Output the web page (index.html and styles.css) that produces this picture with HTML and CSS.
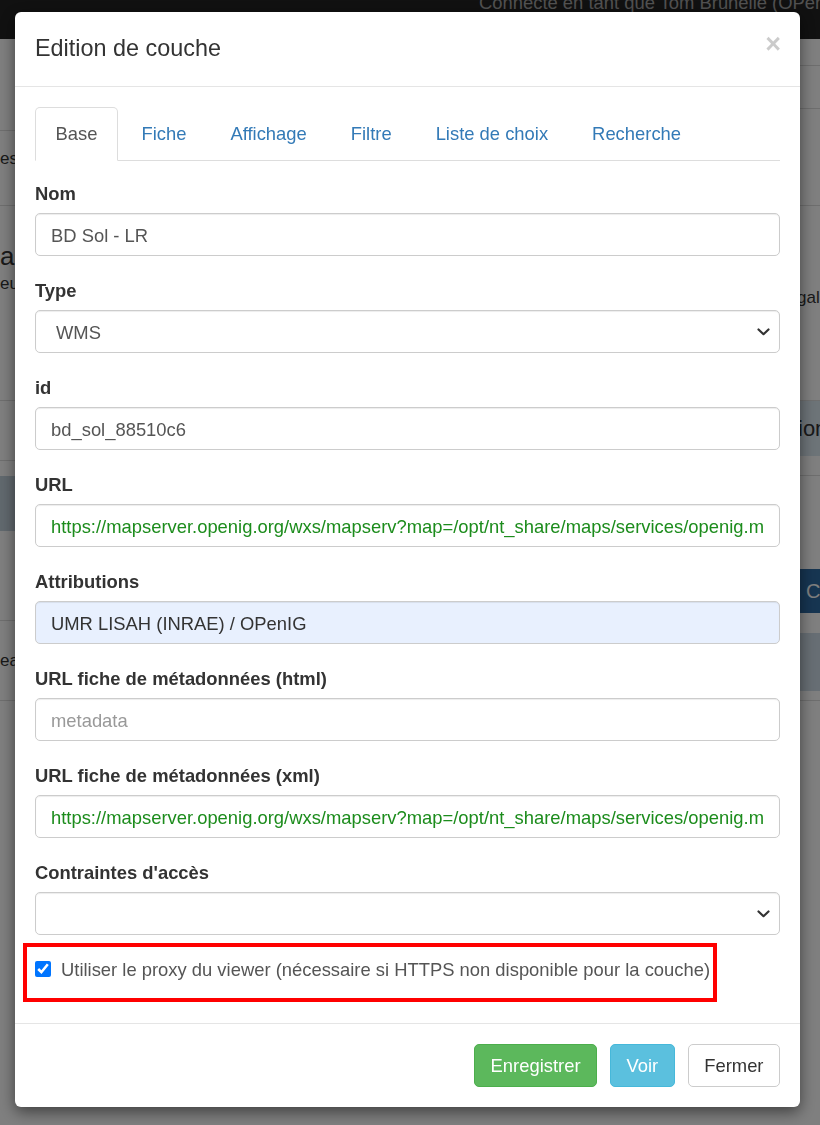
FILE: index.html
```html
<!DOCTYPE html>
<html lang="fr">
<head>
<meta charset="utf-8">
<title>Edition de couche</title>
<link rel="stylesheet" href="styles.css">
</head>
<body>
<div class="page">
  <header class="navbar"><span class="navbar-user">Connecté en tant que Tom Brunelle (OPenIG)</span></header>
  <div class="page-cols">
    <div class="col col-left">
      <div class="bg-row la"></div>
      <div class="bg-row lb"><span class="bg-text">es</span></div>
      <div class="bg-row lc"><span class="bg-title">ar</span><span class="bg-text small">eu</span></div>
      <div class="bg-row ld"></div>
      <div class="bg-spacer"></div>
      <div class="bg-band lband"></div>
      <div class="bg-row le"></div>
      <div class="bg-row lf"><span class="bg-text">ea</span></div>
    </div>
    <div class="col col-right">
      <div class="bg-row ra"></div>
      <div class="bg-row rb"></div>
      <div class="bg-row rc"></div>
      <div class="bg-row rd"><span class="bg-text">gale</span></div>
      <div class="bg-band rband"><span class="bg-big">ion</span></div>
      <div class="bg-row re"></div>
      <div class="bg-row rf"><span class="bg-btn">Co</span></div>
      <div class="bg-band rband2"></div>
      <div class="bg-row rg"></div>
    </div>
  </div>
</div>

<div class="modal-layer">
  <div class="modal">
    <div class="modal-header">
      <h4 class="modal-title">Edition de couche</h4>
      <button class="close" type="button" aria-label="Fermer">×</button>
    </div>
    <div class="modal-body">
      <ul class="nav-tabs">
        <li class="active"><a>Base</a></li>
        <li><a>Fiche</a></li>
        <li><a>Affichage</a></li>
        <li><a>Filtre</a></li>
        <li><a>Liste de choix</a></li>
        <li><a>Recherche</a></li>
      </ul>
      <div class="tab-content">
        <div class="form-group">
          <label>Nom</label>
          <input class="form-control" type="text" value="BD Sol - LR">
        </div>
        <div class="form-group">
          <label>Type</label>
          <div class="select-wrap">
            <select class="form-control select"><option>WMS</option></select>
            <svg class="chevron" width="13" height="8" viewBox="0 0 13 8"><polyline points="1.5,1.5 6.5,6.2 11.5,1.5" fill="none" stroke="#333" stroke-width="2.2" stroke-linecap="round" stroke-linejoin="round"/></svg>
          </div>
        </div>
        <div class="form-group">
          <label>id</label>
          <input class="form-control" type="text" value="bd_sol_88510c6">
        </div>
        <div class="form-group">
          <label>URL</label>
          <input class="form-control url" type="text" value="https://mapserver.openig.org/wxs/mapserv?map=/opt/nt_share/maps/services/openig.map">
        </div>
        <div class="form-group">
          <label>Attributions</label>
          <input class="form-control autofill" type="text" value="UMR LISAH (INRAE) / OPenIG">
        </div>
        <div class="form-group">
          <label>URL fiche de métadonnées (html)</label>
          <input class="form-control" type="text" placeholder="metadata">
        </div>
        <div class="form-group">
          <label>URL fiche de métadonnées (xml)</label>
          <input class="form-control url" type="text" value="https://mapserver.openig.org/wxs/mapserv?map=/opt/nt_share/maps/services/openig.map">
        </div>
        <div class="form-group tight">
          <label>Contraintes d'accès</label>
          <div class="select-wrap">
            <select class="form-control select"><option></option></select>
            <svg class="chevron" width="13" height="8" viewBox="0 0 13 8"><polyline points="1.5,1.5 6.5,6.2 11.5,1.5" fill="none" stroke="#333" stroke-width="2.2" stroke-linecap="round" stroke-linejoin="round"/></svg>
          </div>
        </div>
        <div class="highlight">
          <label class="checkbox"><input type="checkbox" checked><span>Utiliser le proxy du viewer (nécessaire si HTTPS non disponible pour la couche)</span></label>
        </div>
      </div>
    </div>
    <div class="modal-footer">
      <button class="btn btn-success" type="button">Enregistrer</button>
      <button class="btn btn-info" type="button">Voir</button>
      <button class="btn btn-default" type="button">Fermer</button>
    </div>
  </div>
</div>
</body>
</html>
```

FILE: styles.css
```css
* { box-sizing: border-box; }
html, body { margin: 0; height: 100%; }
body {
  font-family: "Liberation Sans", Arial, Helvetica, sans-serif;
  font-size: 18.4px;
  color: #333;
  background: #fff;
  overflow: hidden;
}

/* ---------- page behind the modal ---------- */
.navbar {
  height: 39px;
  background: #222;
  color: #a3a3a3;
  padding-left: 479px;
  white-space: nowrap;
  overflow: hidden;
}
.navbar-user { display: block; line-height: 20px; margin-top: -7px; font-size: 18.4px; }
.page-cols { display: grid; grid-template-columns: 400px 420px; }
.col { display: flex; flex-direction: column; white-space: nowrap; overflow: hidden; }
.bg-row { border-bottom: 1px solid #ddd; }
.bg-text { display: block; line-height: 20px; font-size: 17px; color: #333; }
.bg-title { display: block; line-height: 28px; font-size: 26px; color: #333; }
.bg-big { display: block; line-height: 55px; font-size: 22px; color: #333; padding-left: 398px; }
.la { height: 92px; }
.lb { height: 75px; padding-top: 18px; }
.lc { height: 195px; padding-top: 36px; }
.lc .small { margin-top: 4px; }
.ld { height: 60px; }
.bg-spacer { height: 15px; }
.bg-band { height: 55px; }
.lband { background: #c3d2dd; }
.le { height: 90px; }
.lf { height: 80px; padding-top: 30px; }

.ra { height: 27px; }
.rb { height: 43px; }
.rc { height: 97px; }
.rd { height: 195px; padding-top: 82px; padding-left: 397px; }
.rband { background: #dbe8f1; }
.re { height: 20px; }
.rf { height: 157px; padding-top: 93px; padding-left: 398px; border-bottom: none; }
.bg-btn {
  display: block;
  height: 44px;
  line-height: 44px;
  background: #2d6aa3;
  color: #fff;
  padding-left: 8px;
  font-size: 20px;
}
.rband2 { height: 58px; background: #cfdde8; }
.rg { height: 10px; }

/* ---------- modal ---------- */
.modal-layer {
  position: fixed;
  inset: 0;
  background: rgba(0, 0, 0, 0.5);
  padding: 12px 0 0 15px;
}
.modal {
  width: 785px;
  height: 1095px;
  background: #fff;
  border-radius: 6px;
  box-shadow: 0 5px 15px rgba(0, 0, 0, 0.5);
  display: flex;
  flex-direction: column;
}
.modal-header {
  height: 75px;
  padding: 0 20px;
  border-bottom: 1px solid #e5e5e5;
  display: flex;
  align-items: center;
  justify-content: space-between;
}
.modal-title {
  margin: 0;
  font-size: 23.4px;
  font-weight: normal;
  line-height: 32px;
  color: #333;
  margin-top: -3px;
}
.close {
  border: 0;
  background: transparent;
  padding: 0;
  font-family: "Liberation Sans", Arial, sans-serif;
  font-size: 27px;
  font-weight: bold;
  line-height: 1;
  color: #000;
  opacity: 0.2;
  align-self: flex-start;
  margin-top: 19px;
  margin-right: -1px;
}
.modal-body {
  flex: 1;
  padding: 20px 20px 0;
}

/* tabs */
.nav-tabs {
  list-style: none;
  margin: 0;
  padding: 0;
  display: flex;
  border-bottom: 1px solid #ddd;
}
.nav-tabs li { margin-bottom: -1px; margin-right: 3px; }
.nav-tabs a {
  display: block;
  height: 54px;
  line-height: 52px;
  padding: 0 19.5px;
  border: 1px solid transparent;
  border-radius: 5px 5px 0 0;
  color: #337ab7;
  font-size: 18.4px;
}
.nav-tabs .active a {
  color: #555;
  background: #fff;
  border-color: #ddd #ddd transparent;
}
.tab-content { padding-top: 20px; }

/* form */
.form-group { margin-bottom: 22px; }
.form-group.tight { margin-bottom: 8px; }
.form-group label {
  display: block;
  font-weight: bold;
  line-height: 25px;
  margin-bottom: 7px;
  font-size: 18.4px;
  color: #333;
}
.form-control {
  display: block;
  width: 100%;
  height: 43px;
  padding: 2px 15px 0;
  font-family: "Liberation Sans", Arial, sans-serif;
  font-size: 18.4px;
  color: #555;
  background: #fff;
  border: 1px solid #ccc;
  border-radius: 5px;
  box-shadow: inset 0 1px 1px rgba(0, 0, 0, 0.075);
  outline: none;
}
.form-control::placeholder { color: #999; }
.form-control.url { color: #1c8c1c; }
.form-control.autofill { background: #e8f0fe; color: #333; }
.select-wrap { position: relative; }
.select { appearance: none; -webkit-appearance: none; padding-left: 20px; }
.chevron { position: absolute; right: 10px; top: 18px; pointer-events: none; }

/* highlighted checkbox */
.highlight {
  border: 4px solid #ff0000;
  margin-left: -12px;
  width: 694px;
  height: 59px;
  padding: 10px 0 0 8px;
}
.checkbox {
  display: flex;
  align-items: flex-start;
  line-height: 25px;
  font-size: 18.4px;
  color: #555;
}
.checkbox input {
  width: 16px;
  height: 16px;
  margin: 4px 10px 0 0;
  accent-color: #0075ff;
}

/* footer */
.modal-footer {
  border-top: 1px solid #e5e5e5;
  padding: 20px;
  display: flex;
  justify-content: flex-end;
  gap: 13px;
}
.btn {
  height: 43px;
  padding: 0 15.5px;
  font-family: "Liberation Sans", Arial, sans-serif;
  font-size: 18.4px;
  border: 1px solid transparent;
  border-radius: 5px;
  line-height: 41px;
}
.btn-success { background: #5cb85c; border-color: #4cae4c; color: #fff; }
.btn-info { background: #5bc0de; border-color: #46b8da; color: #fff; }
.btn-default { background: #fff; border-color: #ccc; color: #333; }
```
